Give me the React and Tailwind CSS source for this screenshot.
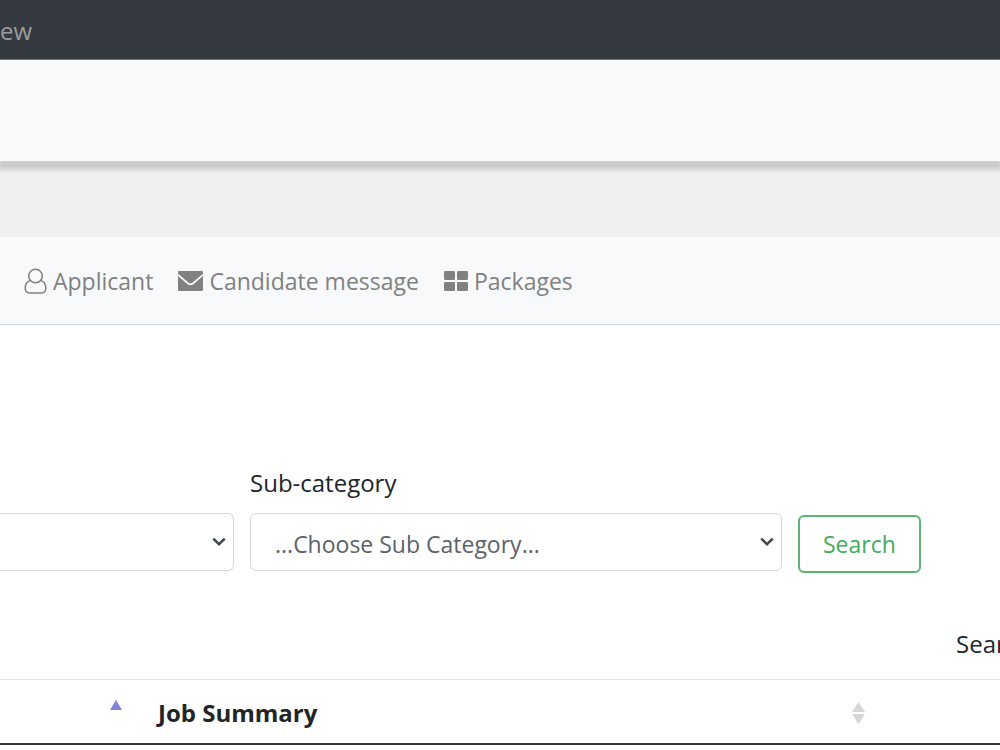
import { useState } from "react";

function UserIcon() {
  return (
    <svg className="w-[23px] h-[26px]" viewBox="0 0 23 26" fill="none" stroke="currentColor" strokeWidth="1.5" aria-hidden="true">
      <circle cx="11.5" cy="8" r="6.8" />
      <path d="M6.4 12.4C3.2 13.4 1.200 16 1.200 20c0 3 1.600 4.900 4.400 4.900h11.800c2.800 0 4.400-1.900 4.400-4.900 0-4-2-6.600-5.200-7.600" />
    </svg>
  );
}

function EnvelopeIcon() {
  return (
    <svg className="w-[25px] h-5" viewBox="0 0 25 20" fill="currentColor" aria-hidden="true">
      <path d="M1 0h23c.6 0 1 .4 1 1v1.800L14.300 11.700c-1 .9-2.600.9-3.600 0L0 2.800V1c0-.6.4-1 1-1z" />
      <path d="M0 5l9.600 8.200c1.700 1.400 4.100 1.400 5.800 0L25 5v13.500c0 .8-.7 1.500-1.500 1.500h-22C.7 20 0 19.300 0 18.500z" />
    </svg>
  );
}

function GridIcon() {
  return (
    <svg className="w-6 h-5" viewBox="0 0 24 20" fill="currentColor" aria-hidden="true">
      <rect x="0" y="0" width="11" height="9" rx="1.2" />
      <rect x="13" y="0" width="11" height="9" rx="1.2" />
      <rect x="0" y="11" width="11" height="9" rx="1.2" />
      <rect x="13" y="11" width="11" height="9" rx="1.2" />
    </svg>
  );
}

function Chevron() {
  return (
    <svg className="absolute right-2 top-6 w-[14px] h-[10px] pointer-events-none" viewBox="0 0 14 10" fill="none" stroke="#43494f" strokeWidth="2.6" aria-hidden="true">
      <path d="M1.3 1.6L7 7.2l5.7-5.6" />
    </svg>
  );
}

export default function App() {
  const [category, setCategory] = useState("");
  const [subCategory, setSubCategory] = useState("");

  return (
    <div className="min-h-screen overflow-hidden bg-white font-['Open_Sans','Noto_Sans',sans-serif] text-[24px] leading-9 text-[#212529]">
      <header className="bg-[#343a40] border-b border-[#75787b] pt-[13px] pb-[10px]">
        <a href="#" className="block w-fit text-[#9a9da0]">ew</a>
      </header>
      <div className="relative h-[101px] bg-[#f8f9fa] shadow-[0_7px_4px_2px_#cccccc]"></div>
      <div className="h-[76px] bg-[#efefef]"></div>

      <nav className="relative flex items-center gap-[25px] bg-[#f8f9fa] border-b border-[#d3d5d6] pl-6 pt-[26px] pb-[25px] text-[23px] text-[#808181]">
        <a href="#" className="flex items-center gap-[6px] whitespace-nowrap"><UserIcon />Applicant</a>
        <a href="#" className="flex items-center gap-[6px] whitespace-nowrap"><EnvelopeIcon />Candidate message</a>
        <a href="#" className="flex items-center gap-[6px] whitespace-nowrap"><GridIcon />Packages</a>
      </nav>

      <main className="pt-[140px]">
        <form onSubmit={(e) => e.preventDefault()} className="grid grid-cols-[234fr_532fr_202fr] gap-x-4 items-end">
          <div className="relative">
            <select
              aria-label="Category"
              value={category}
              onChange={(e) => setCategory(e.target.value)}
              className="block w-full h-[58px] appearance-none rounded-r-md border border-l-0 border-[#d3d8dd] bg-white text-[#495057]"
            >
              <option value=""></option>
            </select>
            <Chevron />
          </div>
          <div>
            <label htmlFor="subCategory" className="block mb-3">Sub-category</label>
            <div className="relative">
              <select
                id="subCategory"
                value={subCategory}
                onChange={(e) => setSubCategory(e.target.value)}
                className="block w-full h-[58px] pl-6 pt-1 appearance-none rounded-md border border-[#d3d8dd] bg-white text-[23px] text-[#5b6269]"
              >
                <option value="">...Choose Sub Category...</option>
              </select>
              <Chevron />
            </div>
          </div>
          <div className="h-14">
            <button type="submit" className="block h-[58px] px-[23px] rounded-md border-2 border-[#5db573] text-[23px] text-[#42ad5c]">Search</button>
          </div>
        </form>

        <div className="flex justify-end mt-[55px]">
          <label htmlFor="tableSearch" className="w-11 overflow-hidden whitespace-nowrap">Search:</label>
          <input id="tableSearch" type="search" className="sr-only" />
        </div>

        <table className="w-full mt-[17px] table-fixed border-t border-[#dee2e6] border-b-2 border-b-[#35383b]">
          <thead>
            <tr>
              <th className="w-[13.4%] h-16 p-0" aria-sort="ascending">
                <svg className="ml-auto mr-3 mb-3 w-3 h-[10px]" viewBox="0 0 12 10" fill="#8084dc" aria-hidden="true">
                  <path d="M6 0l6 10H0z" />
                </svg>
              </th>
              <th className="p-0 pt-1 pl-6 text-left font-bold">
                <div className="flex items-center justify-between">
                  Job Summary
                  <svg className="mr-3 w-[13px] h-[22px]" viewBox="0 0 13 22" fill="#d6d6d6" aria-hidden="true">
                    <path d="M6.5 0L13 10H0zM0 12h13L6.5 22z" />
                  </svg>
                </div>
              </th>
              <th className="w-[12.3%] p-0"></th>
            </tr>
          </thead>
        </table>
      </main>
    </div>
  );
}
